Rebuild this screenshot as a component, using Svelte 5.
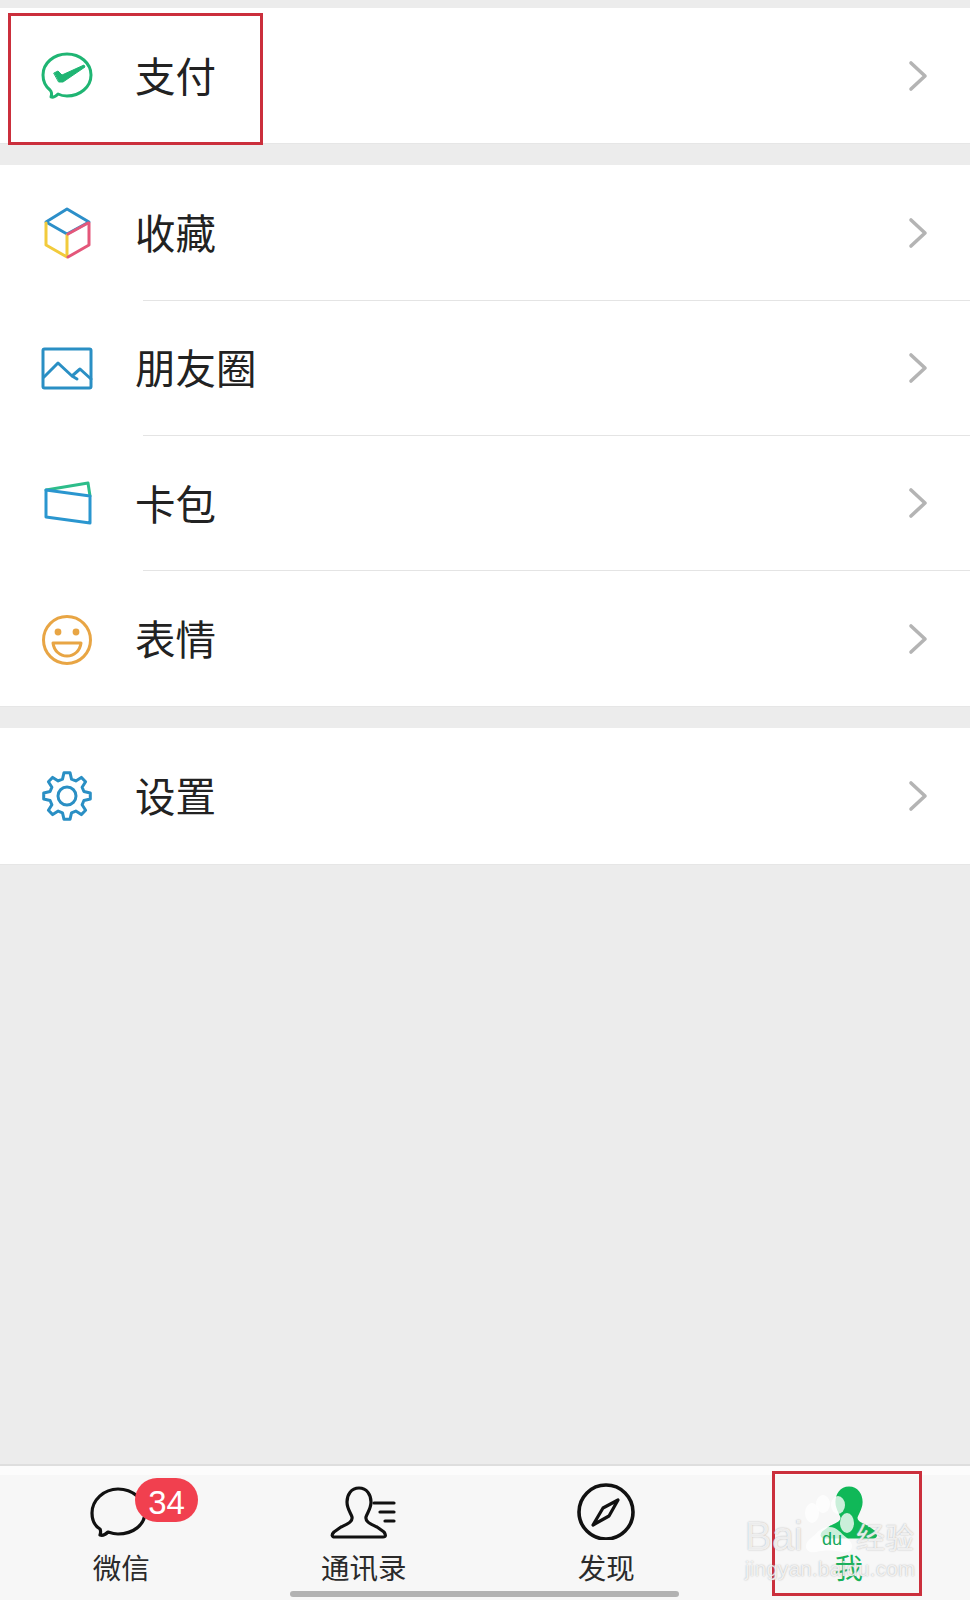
<script>
  const groups = [
    [{ id: 'pay', label: '支付' }],
    [
      { id: 'fav', label: '收藏' },
      { id: 'moments', label: '朋友圈' },
      { id: 'card', label: '卡包' },
      { id: 'smile', label: '表情' }
    ],
    [{ id: 'gear', label: '设置' }]
  ];

  const tabs = [
    { id: 'chat', label: '微信' },
    { id: 'contacts', label: '通讯录' },
    { id: 'discover', label: '发现' },
    { id: 'me', label: '我', active: true }
  ];

  const person =
    'M40 8C32 8 28 15 28 22C28 29 32 33 33 37C34 42 28 44 22 47L15 52C12 55 13 57 16 57L64 57C67 57 67 55 65 52L58 47C52 44 46 42 47 37C48 33 52 29 52 22C52 15 48 8 40 8Z';

  // 8 tooth gear outline around the centre of a 60 box
  function gearPath() {
    let d = '';
    for (let i = 0; i < 8; i++) {
      const a = (i * Math.PI) / 4 - Math.PI / 2;
      const pts = [
        [17.5, a - 0.26],
        [23.5, a - 0.13],
        [23.5, a + 0.13],
        [17.5, a + 0.26]
      ];
      for (const [r, t] of pts) {
        d += (d ? 'L' : 'M') + (30 + r * Math.cos(t)).toFixed(1) + ' ' + (30 + r * Math.sin(t)).toFixed(1);
      }
    }
    return d + 'Z';
  }
</script>

<div class="page">
  <main class="list">
    {#each groups as group}
      <section class="group">
        {#each group as item}
          <div class="row">
            <svg class="icon" viewBox="0 0 60 60" fill="none" stroke-width="3" stroke-linecap="round" stroke-linejoin="round">
              {#if item.id === 'pay'}
                <path d="M14 51C15 48 15 46 13 44C8 40 6 35 6 29C6 17 17 8 30 8C43 8 54 17 54 29C54 41 43 50 30 50C26 50 23 49 21 48C19 50 16 52 14 51Z" stroke="#1fb573" />
                <path d="M17 27L21 25L25 29L47 19L48 21L26 36L22 36Z" fill="#1fb573" stroke="#1fb573" stroke-width="1" />
              {:else if item.id === 'fav'}
                <path d="M9 19L30 6L52 19L30 31Z" stroke="#2c8fc9" />
                <path d="M9 20L9 42L30 54L30 32" stroke="#f2cb3c" />
                <path d="M52 20L52 42L31 54" stroke="#e4577a" />
                <path d="M31 31L51 20" stroke="#e4577a" />
              {:else if item.id === 'moments'}
                <rect x="6" y="11" width="48" height="39" rx="1.5" stroke="#2a8fc4" />
                <path d="M7 39L21 25L35 38L40 41M35 38L43 31L54 41" stroke="#2a8fc4" />
              {:else if item.id === 'card'}
                <path d="M9 17L51 10L53 23" stroke="#2dbd8a" />
                <path d="M9 17L53 23L53 50L9 44Z" stroke="#2a96cf" />
              {:else if item.id === 'smile'}
                <circle cx="30" cy="31" r="23.5" stroke="#e8a544" />
                <circle cx="21" cy="23" r="3.4" fill="#e8a544" />
                <circle cx="39" cy="23" r="3.4" fill="#e8a544" />
                <path d="M16 34L44 34C43 42 37 47 30 47C23 47 17 42 16 34Z" stroke="#e8a544" />
              {:else}
                <path d={gearPath()} stroke="#2a8fc4" />
                <circle cx="30" cy="30" r="9" stroke="#2a8fc4" />
              {/if}
            </svg>
            <span class="label">{item.label}</span>
            <svg class="chevron" viewBox="0 0 20 32" fill="none">
              <path d="M3 3L17 16L3 29" stroke="#b4b4b4" stroke-width="3.6" stroke-linecap="round" stroke-linejoin="round" />
            </svg>
          </div>
        {/each}
      </section>
    {/each}
  </main>

  <nav class="tabbar">
    {#each tabs as tab}
      <div class="tab" class:active={tab.active}>
        <svg class="tab-icon" viewBox="0 0 90 60" fill="none" stroke="#111" stroke-width="3.2" stroke-linejoin="round" stroke-linecap="round">
          {#if tab.id === 'chat'}
            <path d="M24 55C25 52 25 51 24 49C19 46 16 40 16 33C16 20 28 9 42 9C57 9 69 20 69 32C69 45 57 54 42 54C38 54 35 53 32 52C30 54 27 56 24 55Z" />
          {:else if tab.id === 'contacts'}
            <path d={person} />
            <path d="M55 23L75 23M61 32L75 32M66 41L75 41" />
          {:else if tab.id === 'discover'}
            <circle cx="45" cy="32" r="27" stroke-width="3.6" />
            <path d="M57 20L48 36L32 45L42 28Z" />
          {:else}
            <path d={person} transform="translate(5 0)" fill="#10b858" stroke="#10b858" />
          {/if}
        </svg>
        <span class="tab-label">{tab.label}</span>
      </div>
    {/each}
    <span class="home-bar"></span>
  </nav>

  <span class="badge">34</span>
  <div class="mark mark-pay"></div>
  <div class="mark mark-me"></div>

  <div class="watermark">
    <svg class="paw" viewBox="0 0 60 60">
      <ellipse cx="12" cy="18" rx="7" ry="10" />
      <ellipse cx="23" cy="9" rx="7" ry="9" />
      <ellipse cx="38" cy="10" rx="7" ry="9" />
      <ellipse cx="47" cy="28" rx="7" ry="10" />
      <path d="M29 32C38 32 40 38 47 43C56 50 52 59 42 57C34 55 24 55 16 57C6 59 2 50 11 43C18 38 20 32 29 32Z" />
    </svg>
    <span class="bai">Bai</span>
    <span class="du">du</span>
    <span class="jy">经验</span>
    <span class="mark-url">jingyan.baidu.com</span>
  </div>
</div>

<style>
  :global(body) {
    margin: 0;
    background: #ececec;
  }

  .page {
    position: relative;
    width: 970px;
    height: 1600px;
    display: flex;
    flex-direction: column;
    overflow: hidden;
    background: #ececec;
    font-family: "Noto Sans CJK SC", "Liberation Sans", sans-serif;
  }

  .list {
    flex: 1;
    display: flex;
    flex-direction: column;
    gap: 22px;
    padding-top: 8px;
  }

  .group {
    background: #fff;
    box-shadow: 0 1px 0 #e6e6e6;
  }

  .row {
    position: relative;
    height: 135.25px;
    display: flex;
    align-items: center;
    padding-left: 37px;
    padding-right: 42px;
  }

  .row + .row::before {
    content: '';
    position: absolute;
    top: -1px;
    left: 143px;
    right: 0;
    height: 1px;
    background: #e4e4e4;
  }

  .icon {
    width: 60px;
    height: 60px;
    flex: none;
  }

  .label {
    margin-left: 38px;
    margin-bottom: 1px;
    font-size: 40.5px;
    line-height: 1;
    color: #222;
  }

  .chevron {
    width: 20px;
    height: 32px;
    margin-left: auto;
  }

  .tabbar {
    position: relative;
    height: 125px;
    display: grid;
    grid-template-columns: repeat(4, 1fr);
    background: #f7f7f7;
    border-top: 9px solid #fcfcfc;
    box-shadow: 0 -2px 0 #dedede;
  }

  .tab {
    display: flex;
    flex-direction: column;
    align-items: center;
    padding-top: 5px;
  }

  .tab-icon {
    width: 90px;
    height: 60px;
  }

  .tab-label {
    margin-top: 10px;
    font-size: 28.5px;
    line-height: 1.2;
    color: #2a2a2a;
  }

  .active .tab-label {
    color: #18b25a;
  }

  .home-bar {
    position: absolute;
    left: 290px;
    bottom: 3px;
    width: 389px;
    height: 6px;
    border-radius: 3px;
    background: #b2b2b2;
  }

  .badge {
    position: absolute;
    left: 135px;
    top: 1478px;
    width: 63px;
    height: 44px;
    border-radius: 22px;
    background: #f1404f;
    color: #fff;
    font-family: "Liberation Sans", sans-serif;
    font-size: 33px;
    line-height: 49px;
    text-align: center;
  }

  .mark {
    position: absolute;
    box-sizing: border-box;
    border: 3px solid #cb2f3c;
  }

  .mark-pay {
    left: 8px;
    top: 13px;
    width: 255px;
    height: 132px;
  }

  .mark-me {
    left: 772px;
    top: 1471px;
    width: 150px;
    height: 125px;
  }

  .watermark {
    position: absolute;
    left: 745px;
    top: 1490px;
    width: 175px;
    height: 96px;
    color: rgba(255, 255, 255, 0.8);
    font-family: "Liberation Sans", sans-serif;
    text-shadow: 0 0 1.5px rgba(160, 160, 160, 0.9);
  }

  .watermark span {
    position: absolute;
    white-space: nowrap;
  }

  .paw {
    position: absolute;
    left: 55px;
    top: 5px;
    width: 60px;
    height: 60px;
    fill: rgba(255, 255, 255, 0.78);
  }

  .bai {
    left: 0;
    top: 24px;
    font-size: 40px;
    line-height: 44px;
  }

  .du {
    left: 77px;
    top: 39px;
    font-size: 18px;
    line-height: 20px;
    color: #14a85a;
    text-shadow: none;
  }

  .jy {
    left: 111px;
    top: 26px;
    font-family: "Noto Sans CJK SC", sans-serif;
    font-size: 29px;
    line-height: 40px;
  }

  .mark-url {
    left: 0;
    top: 66px;
    font-size: 20.5px;
    letter-spacing: 0.3px;
    line-height: 26px;
  }
</style>
